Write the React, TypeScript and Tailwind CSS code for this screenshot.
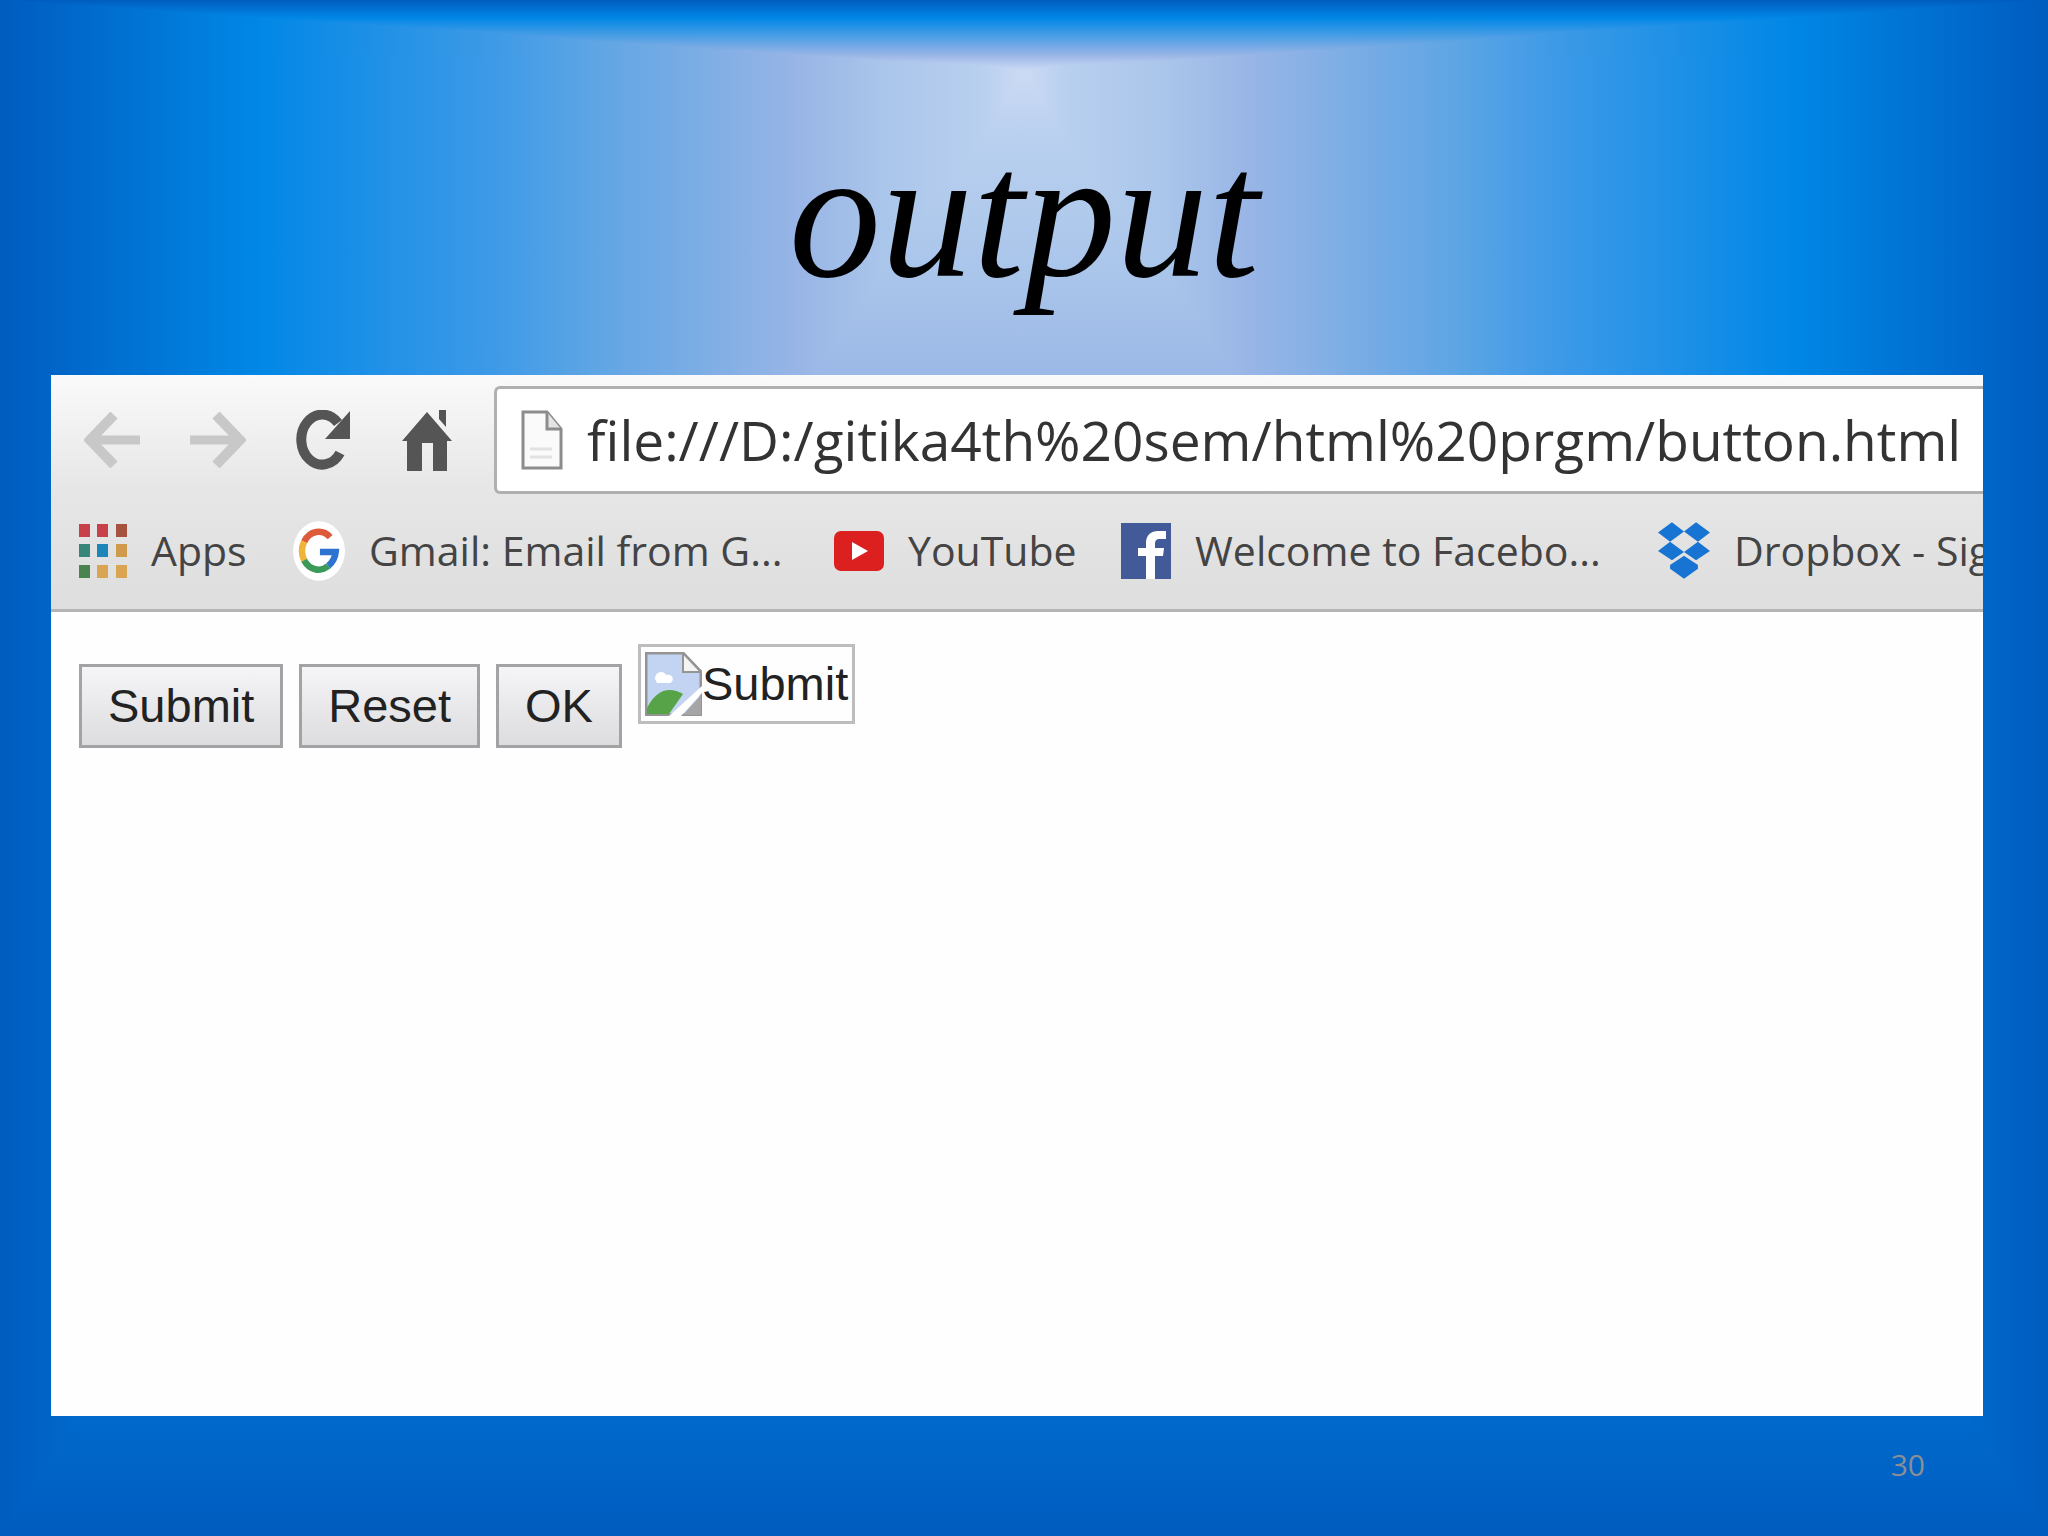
import React from 'react';

interface BookmarkProps {
  label: string;
  width: string;
  icon: React.ReactNode;
}

const BackIcon = () => (
  <svg width="56" height="56" viewBox="0 0 56 56" fill="none" stroke="#c8c8c8" aria-hidden="true">
    <path d="M30 3 6 28l24 25" strokeWidth="10" />
    <path d="M10 28h46" strokeWidth="9" />
  </svg>
);

const ForwardIcon = () => (
  <svg width="56" height="56" viewBox="0 0 56 56" fill="none" stroke="#c8c8c8" aria-hidden="true">
    <path d="M26 3l24 25-24 25" strokeWidth="10" />
    <path d="M0 28h46" strokeWidth="9" />
  </svg>
);

const ReloadIcon = () => (
  <svg width="56" height="60" viewBox="0 0 56 60" aria-hidden="true">
    <path d="M44 43A21 25 0 1 1 42 13" fill="none" stroke="#555" strokeWidth="10" />
    <path d="M54 1v28H29z" fill="#555" />
  </svg>
);

const HomeIcon = () => (
  <svg width="50" height="62" viewBox="0 0 50 62" fill="#555" aria-hidden="true">
    <path d="M25 3 50 32h-5v30H31V34H20v28H5V32H0z" />
    <path d="M37 1h7v17l-7-8z" />
  </svg>
);

const PageIcon = () => (
  <svg width="42" height="60" viewBox="0 0 42 60" aria-hidden="true">
    <path d="M2 2h24l14 17v39H2z" fill="#fafafa" stroke="#8c8c8c" strokeWidth="3" />
    <path d="M26 2v17h14" fill="#e4e4e4" stroke="#8c8c8c" strokeWidth="3" />
    <path d="M9 39h22M9 47h22" stroke="#e2e2e2" strokeWidth="3" />
  </svg>
);

const AppsIcon = () => (
  <svg width="48" height="54" viewBox="0 0 48 54" aria-hidden="true">
    <path d="M0 0h11v13H0zM18 0h11v13H18z" fill="#c8414a" />
    <path d="M37 0h11v13H37z" fill="#a5523f" />
    <path d="M0 20h11v13H0z" fill="#38857a" />
    <path d="M18 20h11v13H18z" fill="#1c86b8" />
    <path d="M37 20h11v13H37z" fill="#d09a4c" />
    <path d="M0 41h11v13H0z" fill="#4a8350" />
    <path d="M18 41h11v13H18zM37 41h11v13H37z" fill="#d9a552" />
  </svg>
);

const GoogleIcon = () => (
  <svg width="52" height="60" viewBox="0 0 56 64" fill="none" strokeWidth="7" aria-hidden="true">
    <ellipse cx="28" cy="32" rx="28" ry="32" fill="#fff" />
    <path d="M40 17A18 21 0 0 0 12 22" stroke="#dd5a3b" />
    <path d="M12 22A18 21 0 0 0 12 42" stroke="#efb43a" />
    <path d="M12 42A18 21 0 0 0 38 48" stroke="#3b9a58" />
    <path d="M38 48A18 21 0 0 0 46 33H29" stroke="#2f73d0" />
  </svg>
);

const YouTubeIcon = () => (
  <svg width="50" height="40" viewBox="0 0 50 40" aria-hidden="true">
    <rect width="50" height="40" rx="7" fill="#dc201f" />
    <path d="M18 11v18l16-9z" fill="#fff" />
  </svg>
);

const FacebookIcon = () => (
  <svg width="50" height="56" viewBox="0 0 50 56" aria-hidden="true">
    <path d="M0 0h50v56H0z" fill="#435a98" />
    <path d="M25 56V33h-8v-8h8v-5c0-8 5-12 12-12h8v8h-6c-4 0-5 2-5 5v4h9l-1 8h-8v23z" fill="#fff" />
  </svg>
);

// Each lozenge is one panel of the open box, the last one is its base
const DropboxIcon = () => (
  <svg width="52" height="60" viewBox="0 0 56 62" fill="#1874d2" aria-hidden="true">
    <path d="M15 0 28 10 13 21 0 11zM41 0l15 11-13 10L28 10z" />
    <path d="M13 21 28 32 15 41 0 31zM43 21l13 10-15 10-13-9z" />
    <path d="m28 36 15 10v4L28 61 13 50v-4z" />
  </svg>
);

const BrokenImageIcon = () => (
  <svg width="57" height="64" viewBox="0 0 57 64" aria-hidden="true">
    <path d="M1 1h37l18 19v43H1z" fill="#c3d4f2" stroke="#949494" strokeWidth="3" />
    <path d="M10 27c0-8 9-9 11-4 7-2 9 6 4 8H12z" fill="#fff" />
    <path d="M2 56c9-18 22-22 36-14L24 62H2z" fill="#56a447" />
    <path d="M38 1v19h18z" fill="#f4f4f4" stroke="#949494" strokeWidth="2" />
    <path d="M57 34v7L36 64H24z" fill="#fff" />
    <path d="M56 43v20H38z" fill="#a5a5a5" />
  </svg>
);

const Bookmark = ({ label, width, icon }: BookmarkProps) => (
  <a href="#" className={`flex shrink-0 items-center gap-6 whitespace-nowrap ${width}`}>
    {icon}
    <span>{label}</span>
  </a>
);

const Toolbar = () => (
  <div className="flex h-[122px] items-center pt-2 pl-[33px]">
    <button aria-label="Back" className="mr-[50px]"><BackIcon /></button>
    <button aria-label="Forward" className="mr-[50px]"><ForwardIcon /></button>
    <button aria-label="Reload" className="mr-[50px]"><ReloadIcon /></button>
    <button aria-label="Home" className="mr-[42px]"><HomeIcon /></button>
    <label className="flex h-[108px] min-w-0 flex-1 items-center gap-6 rounded-l-md border-y-3 border-l-3 border-[#b0b0b0] bg-white pl-6">
      <PageIcon />
      <input
        type="text"
        aria-label="Address"
        defaultValue="file:///D:/gitika4th%20sem/html%20prgm/button.html"
        className="min-w-0 flex-1 font-['Open_Sans',sans-serif] text-[55px] leading-[80px] text-[#333] outline-none"
      />
    </label>
  </div>
);

const Bookmarks = () => (
  <nav className="flex h-[112px] items-center overflow-hidden pb-1 pl-7 font-['Open_Sans',sans-serif] text-[41px] text-[#444]">
    <Bookmark label="Apps" width="w-[214px]" icon={<AppsIcon />} />
    <Bookmark label="Gmail: Email from G..." width="w-[541px]" icon={<GoogleIcon />} />
    <Bookmark label="YouTube" width="w-[287px]" icon={<YouTubeIcon />} />
    <Bookmark label="Welcome to Facebo..." width="w-[537px]" icon={<FacebookIcon />} />
    <Bookmark label="Dropbox - Sign in" width="w-[420px]" icon={<DropboxIcon />} />
  </nav>
);

const FormButton = ({ label }: { label: string }) => (
  <button className="h-[84px] border-3 border-[#a3a3a5] bg-linear-to-b from-[#f5f4f6] to-[#dddcde] px-[26px]">
    {label}
  </button>
);

const App = () => {
  return (
    <div className="flex min-h-screen flex-col bg-[linear-gradient(to_right,#005cbf,#0087e6_12.5%,#3d9ae8_24%,#5ea5e4_29%,#98b5e6_39%,#a9c5ea_43%,#b9d0ef_48%,#ccdaf4_50%,#b9d0ef_52%,#a9c5ea_57%,#98b5e6_61%,#5ea5e4_71%,#3d9ae8_76%,#0087e6_87.5%,#005cbf),linear-gradient(to_bottom,#005cbf,#0087e6_18px,#98b5e6_55px,#ccdaf4_70px,#b9d0ef_9%,#a9c5ea_18%,#98b5e6_26%,#0087e6_76%,#005cbf)] bg-blend-darken">
      <h1 className="h-[375px] pt-[108px] text-center font-['Liberation_Serif',serif] text-[184px] leading-[212px] text-black italic">
        output
      </h1>

      <main className="mr-[65px] ml-[51px] flex-1 bg-[#fefefe]">
        <header className="border-b-3 border-[#b5b5b6] bg-linear-to-b from-[#fafafa] via-[#e6e6e6] to-[#dfdedf]">
          <Toolbar />
          <Bookmarks />
        </header>

        <form
          className="flex items-start gap-4 px-7 pt-8 font-['Liberation_Sans',sans-serif] text-[47px] leading-[56px] text-[#222]"
          onSubmit={(e) => e.preventDefault()}
        >
          <div className="flex gap-4 pt-5">
            <FormButton label="Submit" />
            <FormButton label="Reset" />
            <FormButton label="OK" />
          </div>
          <button className="flex h-[80px] items-center border-3 border-[#bdbdbd] px-1">
            <BrokenImageIcon />
            <span>Submit</span>
          </button>
        </form>
      </main>

      <footer className="flex h-[120px] items-center justify-end pr-[123px] pb-6 font-['Open_Sans',sans-serif] text-[30px] text-[#8b8f95]">
        30
      </footer>
    </div>
  );
};

export default App;
